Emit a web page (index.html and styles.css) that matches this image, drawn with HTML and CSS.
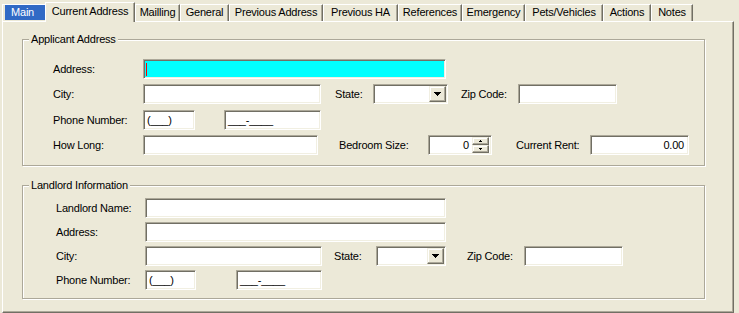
FILE: index.html
```html
<!DOCTYPE html>
<html>
<head>
<meta charset="utf-8">
<link rel="stylesheet" href="styles.css">
</head>
<body>
<div class="tabs">
  <div class="tab tab-main"><span class="focus">Main</span></div>
  <div class="tab tab-active w-current">Current Address</div>
  <div class="tab w-mail">Mailling</div>
  <div class="tab w-general">General</div>
  <div class="tab w-prevaddr">Previous Address</div>
  <div class="tab w-prevha">Previous HA</div>
  <div class="tab w-refs">References</div>
  <div class="tab w-emerg">Emergency</div>
  <div class="tab w-pets">Pets/Vehicles</div>
  <div class="tab w-actions">Actions</div>
  <div class="tab w-notes">Notes</div>
</div>
<div class="panel">
  <div class="group g1">
    <div class="group-title">Applicant Address</div>
    <div class="rows">
      <div class="row">
        <div class="lbl w90">Address:</div>
        <div class="field caret-field w303"><span class="caret"></span></div>
      </div>
      <div class="row">
        <div class="lbl w90">City:</div>
        <div class="field w178"></div>
        <div class="lbl w38 ml14">State:</div>
        <div class="field select w75"><span class="drop-btn"><svg width="7" height="4" viewBox="0 0 7 4"><path d="M0 0h7v1h-1v1h-1v1h-1v1h-1v-1h-1v-1h-1v-1h-1z"/></svg></span></div>
        <div class="lbl w57 ml13">Zip Code:</div>
        <div class="field w99"></div>
      </div>
      <div class="row row-loose">
        <div class="lbl w90">Phone Number:</div>
        <div class="field w52">(___)</div>
        <div class="field w97 ml29">___-____</div>
      </div>
      <div class="row">
        <div class="lbl w90">How Long:</div>
        <div class="field w175"></div>
        <div class="lbl w89 ml21">Bedroom Size:</div>
        <div class="field spin w64">
          <span class="spin-val">0</span>
          <span class="spin-btns">
            <span class="spin-btn"><svg width="3" height="2" viewBox="0 0 3 2"><path d="M1 0h1v1h1v1h-3v-1h1z"/></svg></span>
            <span class="spin-btn"><svg width="3" height="2" viewBox="0 0 3 2"><path d="M0 0h3v1h-1v1h-1v-1h-1z"/></svg></span>
          </span>
        </div>
        <div class="lbl w74 ml24">Current Rent:</div>
        <div class="field num w99">0.00</div>
      </div>
    </div>
  </div>
  <div class="group g2">
    <div class="group-title">Landlord Information</div>
    <div class="rows">
      <div class="row">
        <div class="lbl w89">Landlord Name:</div>
        <div class="field w301"></div>
      </div>
      <div class="row">
        <div class="lbl w89">Address:</div>
        <div class="field w301"></div>
      </div>
      <div class="row">
        <div class="lbl w89">City:</div>
        <div class="field w177"></div>
        <div class="lbl w42 ml12">State:</div>
        <div class="field select w70"><span class="drop-btn"><svg width="7" height="4" viewBox="0 0 7 4"><path d="M0 0h7v1h-1v1h-1v1h-1v1h-1v-1h-1v-1h-1v-1h-1z"/></svg></span></div>
        <div class="lbl w57 ml21">Zip Code:</div>
        <div class="field w99"></div>
      </div>
      <div class="row">
        <div class="lbl w89">Phone Number:</div>
        <div class="field w51">(___)</div>
        <div class="field w86 ml40">___-____</div>
      </div>
    </div>
  </div>
</div>
</body>
</html>
```
FILE: styles.css
```css
* { box-sizing: border-box; }

body {
  margin: 0;
  width: 739px;
  height: 313px;
  overflow: hidden;
  background: #ece9d8;
  font-family: "Liberation Sans", Arial, sans-serif;
  font-size: 11px;
  letter-spacing: -0.2px;
  color: #000;
}

/* ---------- tabs ---------- */
.tabs {
  display: flex;
  align-items: flex-end;
  height: 21px;
  padding-left: 2px;
}

.tab {
  flex: none;
  height: 17px;
  border-top: 1px solid #fff;
  border-left: 1px solid #fff;
  border-right: 1px solid #716f64;
  box-shadow: inset -1px 0 #aca899;
  text-align: center;
  line-height: 15px;
  white-space: nowrap;
}

.tab-main {
  width: 43px;
  border-right: none;
  box-shadow: none;
}

.focus {
  display: block;
  margin-left: 2px;
  width: 40px;
  height: 15px;
  padding-left: 6px;
  background: #316ac5;
  color: #fff;
  text-align: left;
  line-height: 15px;
}

.tab-active {
  height: 20px;
  margin-bottom: -1px;
  position: relative;
  z-index: 1;
  background: #ece9d8;
  line-height: 17px;
}

.w-current { width: 90px; }
.w-mail { width: 45px; }
.w-general { width: 49px; }
.w-prevaddr { width: 94px; }
.w-prevha { width: 75px; }
.w-refs { width: 64px; }
.w-emerg { width: 63px; }
.w-pets { width: 78px; }
.w-actions { width: 48px; }
.w-notes { width: 42px; }

/* ---------- panel ---------- */
.panel {
  margin-left: 2px;
  width: 732px;
  height: 292px;
  border: 1px solid;
  border-color: #fff #716f64 #716f64 #fff;
  box-shadow: inset -1px -1px #aca899;
  padding-top: 17px;
  padding-left: 19px;
}

.group {
  position: relative;
  width: 683px;
  border: 1px solid #aca899;
  box-shadow: 1px 1px 0 #fff, inset 1px 1px 0 #fff;
}

.group-title {
  position: absolute;
  top: -7px;
  left: 6px;
  padding: 0 2px;
  line-height: 13px;
  background: #ece9d8;
  white-space: nowrap;
}

.g1 {
  height: 127px;
  padding: 19px 0 0 30px;
}

.g2 {
  height: 114px;
  margin-top: 19px;
  padding: 12px 0 0 33px;
}

.rows {
  display: flex;
  flex-direction: column;
}

.g1 .rows { gap: 5px; }
.g2 .rows { gap: 4px; }
.row-loose { margin-top: 1px; }

.row {
  display: flex;
  align-items: center;
  height: 20px;
}

.lbl {
  flex: none;
  white-space: nowrap;
}

/* ---------- fields ---------- */
.field {
  flex: none;
  display: flex;
  align-items: center;
  height: 20px;
  padding-left: 3px;
  background: #fff;
  border: 1px solid;
  border-color: #aca899 #fff #fff #aca899;
  box-shadow: inset 1px 1px #716f64, inset -1px -1px #f1efe2;
  white-space: nowrap;
}

.caret-field {
  background: #00ffff;
  padding-left: 2px;
}

.caret {
  display: block;
  width: 1px;
  height: 13px;
  background: #ff0000;
}

.num {
  justify-content: flex-end;
  padding-right: 4px;
}

.select {
  justify-content: flex-end;
  padding: 1px;
}

.drop-btn,
.spin-btn {
  display: flex;
  align-items: center;
  justify-content: center;
  background: #ece9d8;
  border: 1px solid;
  border-color: #f1efe2 #716f64 #716f64 #f1efe2;
  box-shadow: inset -1px -1px #aca899, inset 1px 1px #fff;
}

.drop-btn {
  width: 17px;
  height: 16px;
}

.spin {
  padding: 1px;
}

.spin-val {
  flex: 1;
  text-align: right;
  padding-right: 3px;
}

.spin-btns {
  display: flex;
  flex-direction: column;
  width: 17px;
  height: 16px;
  margin-right: 1px;
}

.spin-btn {
  height: 8px;
}

svg { display: block; fill: #000; }

/* widths & spacing */
.w38 { width: 38px; }
.w42 { width: 42px; }
.w51 { width: 51px; }
.w52 { width: 52px; }
.w57 { width: 57px; }
.w64 { width: 64px; }
.w70 { width: 70px; }
.w74 { width: 74px; }
.w75 { width: 75px; }
.w86 { width: 86px; }
.w89 { width: 89px; }
.w90 { width: 90px; }
.w97 { width: 97px; }
.w99 { width: 99px; }
.w175 { width: 175px; }
.w177 { width: 177px; }
.w178 { width: 178px; }
.w301 { width: 301px; }
.w303 { width: 303px; }

.ml12 { margin-left: 12px; }
.ml13 { margin-left: 13px; }
.ml14 { margin-left: 14px; }
.ml21 { margin-left: 21px; }
.ml24 { margin-left: 24px; }
.ml29 { margin-left: 29px; }
.ml40 { margin-left: 40px; }
```
